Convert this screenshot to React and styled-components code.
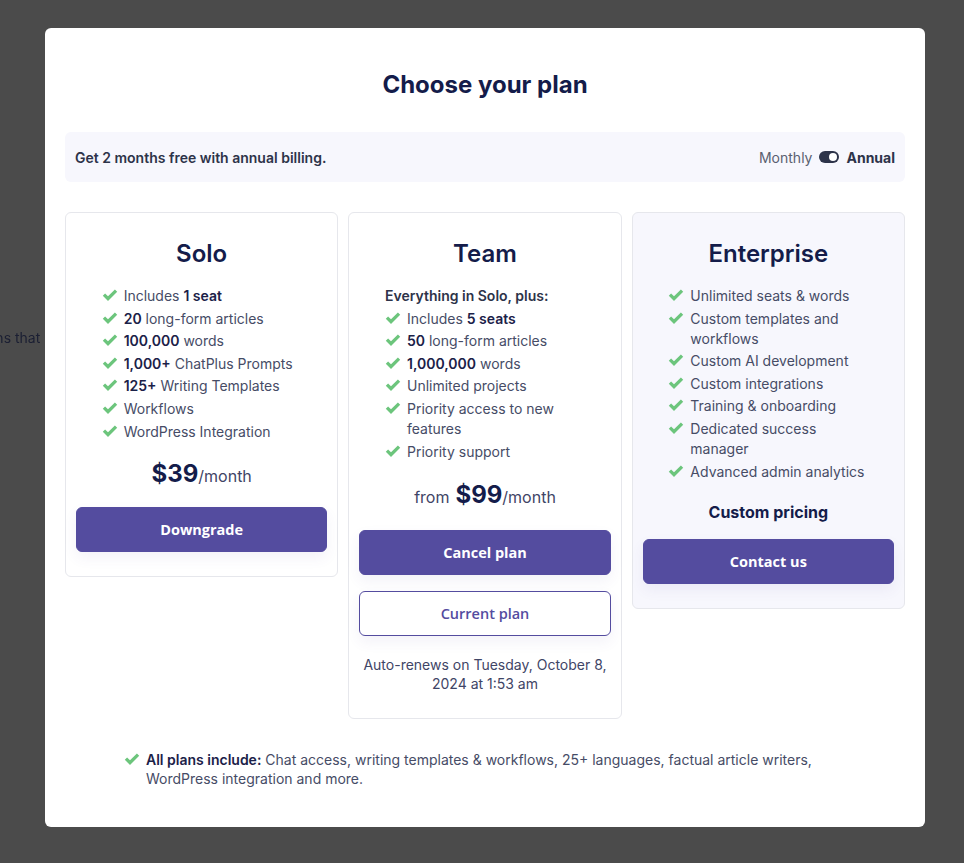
import React from "react";
import styled, { createGlobalStyle } from "styled-components";

const Global = createGlobalStyle`
  html, body { margin: 0; padding: 0; }
  body {
    background: #4b4b4b;
    font-family: Inter, "Noto Sans", sans-serif;
    width: 964px;
    height: 863px;
    overflow: hidden;
  }
`;

const Backdrop = styled.div`
  position: fixed;
  inset: 0;
  background: #4b4b4b;
`;

const BehindText = styled.div`
  position: absolute;
  left: -21px;
  top: 329px;
  font-size: 14px;
  color: #1b1f33;
  font-family: Inter, sans-serif;
`;

const Modal = styled.div`
  position: absolute;
  left: 45px;
  top: 28px;
  width: 880px;
  height: 799px;
  box-sizing: border-box;
  background: #ffffff;
  border-radius: 6px;
  padding: 41px 20px 0;
  display: flex;
  flex-direction: column;
`;

const Title = styled.h1`
  margin: 0;
  text-align: center;
  font-size: 24px;
  line-height: 32px;
  font-weight: 700;
  color: #141c4a;
`;

const Banner = styled.div`
  margin-top: 31px;
  height: 50px;
  background: #f7f7fd;
  border-radius: 6px;
  display: flex;
  align-items: center;
  justify-content: space-between;
  padding: 0 10px;
`;

const BannerText = styled.span`
  font-size: 14px;
  font-weight: 600;
  color: #2d3349;
`;

const BillingSwitch = styled.div`
  display: flex;
  align-items: center;
  gap: 7px;
  font-size: 14px;
`;

const SwitchLabel = styled.span`
  color: ${(p) => (p.$active ? "#2d3349" : "#5a6070")};
  font-weight: ${(p) => (p.$active ? 700 : 400)};
`;

const Toggle = styled.span`
  width: 20px;
  height: 12px;
  border-radius: 6px;
  background: #2d3349;
  position: relative;
  &::after {
    content: "";
    position: absolute;
    right: 2px;
    top: 2px;
    width: 8px;
    height: 8px;
    border-radius: 50%;
    background: #fff;
  }
`;

const Cards = styled.div`
  margin-top: 30px;
  display: grid;
  grid-template-columns: repeat(3, 1fr);
  gap: 10px;
  align-items: start;
`;

const Card = styled.div`
  border: 1px solid #e6e7ec;
  border-radius: 6px;
  background: ${(p) => (p.$tint ? "#f7f7fd" : "#ffffff")};
  padding: 25px 10px 24px;
  display: flex;
  flex-direction: column;
  align-items: center;
`;

const PlanName = styled.h2`
  margin: 0;
  font-size: 24px;
  line-height: 32px;
  font-weight: 600;
  color: #141c4a;
`;

const List = styled.ul`
  list-style: none;
  margin: 16px 0 0;
  padding: 0;
  width: 200px;
  display: flex;
  flex-direction: column;
  gap: 2.6px;
`;

const Lead = styled.li`
  font-size: 14px;
  line-height: 20px;
  font-weight: 600;
  color: #2d3349;
`;

const Item = styled.li`
  display: flex;
  align-items: flex-start;
  gap: 6px;
  font-size: 14px;
  line-height: 20px;
  color: #464c66;
  b { color: #1b2148; font-weight: 600; }
`;

const CheckSvg = styled.svg`
  flex: none;
  width: 16px;
  height: 13px;
  margin-top: 3px;
`;

const Check = () => (
  <CheckSvg viewBox="0 0 16 13">
    <path d="M0.8 6.8 L3.1 4.5 L6 7.3 L12.9 0.5 L15.2 2.8 L6 12 Z" fill="#6cc57c" />
  </CheckSvg>
);

const Price = styled.div`
  margin-top: ${(p) => p.$mt}px;
  font-size: 16px;
  color: #3f4566;
  display: flex;
  align-items: baseline;
  gap: ${(p) => (p.$gap ? "6px" : "0")};
`;

const Amount = styled.span`
  font-size: 24px;
  font-weight: 700;
  color: #141c4a;
`;

const CustomPrice = styled.div`
  margin-top: 19px;
  font-size: 16px;
  line-height: 22px;
  font-weight: 700;
  color: #141c4a;
`;

const Button = styled.button`
  margin-top: ${(p) => p.$mt || 16}px;
  width: 100%;
  height: 45px;
  border-radius: 6px;
  font-family: "Open Sans", sans-serif;
  font-weight: ${(p) => (p.$outline ? 600 : 700)};
  font-size: 14.5px;
  cursor: pointer;
  background: ${(p) => (p.$outline ? "#ffffff" : "#544c9f")};
  color: ${(p) => (p.$outline ? "#544c9f" : "#ffffff")};
  border: 1px solid #544c9f;
  box-shadow: 0 6px 14px rgba(84, 76, 159, 0.07);
`;

const Renew = styled.p`
  margin: 19px 0 0;
  font-size: 14px;
  line-height: 19.5px;
  text-align: center;
  color: #3f4566;
`;

const Footer = styled.div`
  margin: 31px auto 0;
  width: 722px;
  display: flex;
  gap: 6px;
  font-size: 14px;
  line-height: 19px;
  color: #464c66;
  b { color: #1b2148; font-weight: 600; }
`;

const Footnote = styled.p`
  margin: 0;
`;

export default function App() {
  return (
    <>
      <Global />
      <Backdrop>
        <BehindText>tions that</BehindText>
      </Backdrop>
      <Modal>
        <Title>Choose your plan</Title>
        <Banner>
          <BannerText>Get 2 months free with annual billing.</BannerText>
          <BillingSwitch>
            <SwitchLabel>Monthly</SwitchLabel>
            <Toggle />
            <SwitchLabel $active>Annual</SwitchLabel>
          </BillingSwitch>
        </Banner>
        <Cards>
          <Card>
            <PlanName>Solo</PlanName>
            <List>
              <Item><Check /><span>Includes <b>1 seat</b></span></Item>
              <Item><Check /><span><b>20</b> long-form articles</span></Item>
              <Item><Check /><span><b>100,000</b> words</span></Item>
              <Item><Check /><span><b>1,000+</b> ChatPlus Prompts</span></Item>
              <Item><Check /><span><b>125+</b> Writing Templates</span></Item>
              <Item><Check /><span>Workflows</span></Item>
              <Item><Check /><span>WordPress Integration</span></Item>
            </List>
            <Price $mt={17}><Amount>$39</Amount>/month</Price>
            <Button $mt={19}>Downgrade</Button>
          </Card>
          <Card>
            <PlanName>Team</PlanName>
            <List>
              <Lead>Everything in Solo, plus:</Lead>
              <Item><Check /><span>Includes <b>5 seats</b></span></Item>
              <Item><Check /><span><b>50</b> long-form articles</span></Item>
              <Item><Check /><span><b>1,000,000</b> words</span></Item>
              <Item><Check /><span>Unlimited projects</span></Item>
              <Item><Check /><span>Priority access to new features</span></Item>
              <Item><Check /><span>Priority support</span></Item>
            </List>
            <Price $mt={18} $gap>from <span><Amount>$99</Amount>/month</span></Price>
            <Button $mt={21}>Cancel plan</Button>
            <Button $outline>Current plan</Button>
            <Renew>Auto-renews on Tuesday, October 8,<br />2024 at 1:53 am</Renew>
          </Card>
          <Card $tint>
            <PlanName>Enterprise</PlanName>
            <List>
              <Item><Check /><span>Unlimited seats &amp; words</span></Item>
              <Item><Check /><span>Custom templates and workflows</span></Item>
              <Item><Check /><span>Custom AI development</span></Item>
              <Item><Check /><span>Custom integrations</span></Item>
              <Item><Check /><span>Training &amp; onboarding</span></Item>
              <Item><Check /><span>Dedicated success manager</span></Item>
              <Item><Check /><span>Advanced admin analytics</span></Item>
            </List>
            <CustomPrice>Custom pricing</CustomPrice>
            <Button $mt={16}>Contact us</Button>
          </Card>
        </Cards>
        <Footer>
          <Check />
          <Footnote>
            <b>All plans include:</b> Chat access, writing templates &amp; workflows, 25+ languages, factual article writers, WordPress integration and more.
          </Footnote>
        </Footer>
      </Modal>
    </>
  );
}
